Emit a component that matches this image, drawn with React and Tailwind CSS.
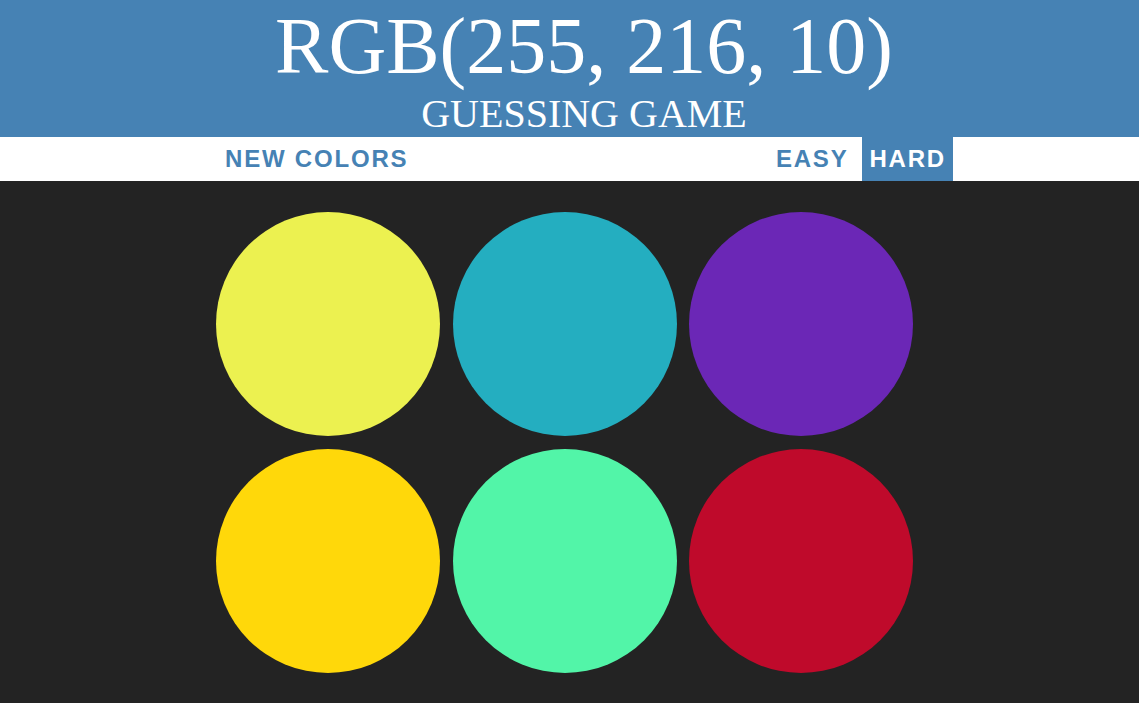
export default function App() {
  const colors = ["#ecf150", "#24aec0", "#6b27b6", "#ffd80a", "#52f5a8", "#bf0a2b"];
  return (
    <div className="min-h-screen w-full bg-[#232323]" style={{ minHeight: 703 }}>
      <header className="h-[137px] bg-[#4682b4] pl-[29px] pt-[6px] text-center text-white font-['Liberation_Serif',serif]">
        <h1 className="text-[80px] leading-[80px] font-normal">RGB(255, 216, 10)</h1>
        <div className="mt-[8px] text-[40px] leading-[40px]">GUESSING GAME</div>
      </header>
      <div className="h-[44px] bg-white">
        <div className="ml-[218px] w-[735px] h-full flex items-stretch justify-between font-['Liberation_Sans',Arial,sans-serif] font-bold text-[24px] tracking-[1.8px] text-[#4682b4]">
          <button className="px-[7px] flex items-center uppercase">NEW COLORS</button>
          <div className="flex items-stretch">
            <button className="px-[7px] mr-[7px] flex items-center">EASY</button>
            <button className="px-[7px] flex items-center bg-[#4682b4] text-white">HARD</button>
          </div>
        </div>
      </div>
      <div className="pt-[31px] pl-[216px]">
        <div className="grid grid-cols-[224px_224px_224px] gap-x-[12.5px] gap-y-[12.5px]">
          {colors.map((c, i) => (
            <div key={i} className="w-[224px] h-[224px] rounded-full" style={{ backgroundColor: c }} />
          ))}
        </div>
      </div>
    </div>
  );
}
